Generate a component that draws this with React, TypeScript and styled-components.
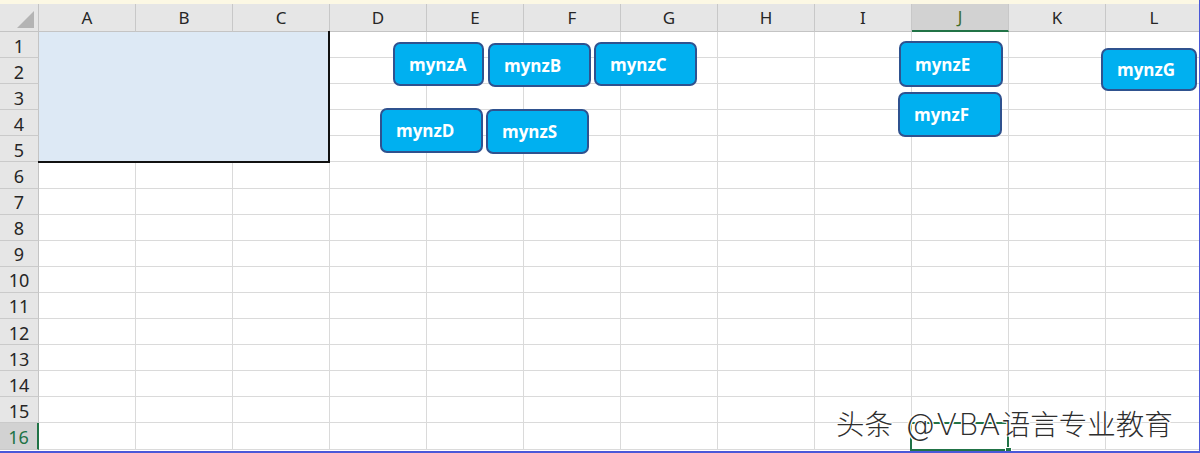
import React from "react";
import styled, { createGlobalStyle } from "styled-components";

const GlobalStyle = createGlobalStyle`
  html, body { margin: 0; padding: 0; background: #ffffff; overflow: hidden; }
  * { box-sizing: border-box; }
`;

const COLS = ["A", "B", "C", "D", "E", "F", "G", "H", "I", "J", "K", "L"];
const ROWS = Array.from({ length: 16 }, (_, i) => i + 1);
const ACTIVE_COL = "J";
const ACTIVE_ROW = 16;

const Window = styled.div`
  position: relative;
  width: 1200px;
  height: 453px;
  overflow: hidden;
  background: #ffffff;
  border-right: 1px solid #4a58d8;
  border-bottom: 2px solid #4a58d8;
  font-family: "Noto Sans", "Liberation Sans", sans-serif;
`;

const TopStrip = styled.div`
  height: 4px;
  background: #fcf8e4;
`;

const Sheet = styled.div`
  display: grid;
  grid-template-columns: 39px repeat(12, 97px);
  grid-template-rows: 28px repeat(16, 26.1px);
  width: 1203px;
`;

const Corner = styled.div`
  position: relative;
  background: #e6e6e6;
  border-right: 1px solid #c4c4c4;
  border-bottom: 1px solid #c4c4c4;
`;

const CornerTriangle = styled.svg`
  position: absolute;
  left: 16px;
  top: 6px;
`;

const ColHeader = styled.div<{ $active?: boolean }>`
  display: flex;
  align-items: flex-end;
  justify-content: center;
  padding-bottom: 1px;
  background: ${(p) => (p.$active ? "#d2d2d2" : "#e6e6e6")};
  border-right: 1px solid #c8c8c8;
  border-bottom: ${(p) => (p.$active ? "2px solid #217346" : "1px solid #c4c4c4")};
  color: ${(p) => (p.$active ? "#3f6b2a" : "#262626")};
  font-size: 17px;
  line-height: 24px;
`;

const RowHeader = styled.div<{ $active?: boolean }>`
  display: flex;
  align-items: center;
  justify-content: center;
  padding-top: 2px;
  background: ${(p) => (p.$active ? "#d2d2d2" : "#e6e6e6")};
  border-right: ${(p) => (p.$active ? "2px solid #217346" : "1px solid #c4c4c4")};
  border-bottom: 1px solid #cacaca;
  color: ${(p) => (p.$active ? "#217346" : "#262626")};
  font-size: 18px;
  line-height: 20px;
`;

const Cell = styled.div<{ $filled?: boolean }>`
  background: ${(p) => (p.$filled ? "#dde9f5" : "#ffffff")};
  border-right: 1px solid ${(p) => (p.$filled ? "#dde9f5" : "#dadada")};
  border-bottom: 1px solid ${(p) => (p.$filled ? "#dde9f5" : "#dadada")};
`;

const RangeBorder = styled.div`
  position: absolute;
  left: 38px;
  top: 31px;
  width: 292px;
  height: 132px;
  border-right: 2px solid #111111;
  border-bottom: 2px solid #111111;
  pointer-events: none;
`;

const ActiveCell = styled.div`
  position: absolute;
  left: 910px;
  top: 422px;
  width: 99px;
  height: 29px;
  border: 2px solid #217346;
  pointer-events: none;
`;

const FillHandle = styled.div`
  position: absolute;
  right: -5px;
  bottom: -5px;
  width: 7px;
  height: 7px;
  background: #217346;
  border: 1px solid #ffffff;
`;

const ShapeButton = styled.div`
  position: absolute;
  display: flex;
  align-items: center;
  padding-left: 14px;
  background: #00b0f0;
  border: 2px solid #2f528f;
  border-radius: 7px;
  color: #ffffff;
  font-family: "Open Sans", "Liberation Sans", sans-serif;
  font-weight: 700;
  font-size: 17px;
`;

const Watermark = styled.div`
  position: absolute;
  left: 836px;
  top: 404px;
  color: #2e2e2e;
  font-family: "Noto Sans CJK SC", "Noto Sans", sans-serif;
  font-weight: 300;
  font-size: 28.5px;
  line-height: 38px;
  white-space: nowrap;
  text-shadow: 1px 1px 0 #fff, -1px -1px 0 #fff, 1px -1px 0 #fff, -1px 1px 0 #fff;
`;

const Latin = styled.span`
  font-family: "DejaVu Sans", "Noto Sans", sans-serif;
  font-weight: 200;
  font-size: 30px;
  letter-spacing: 1.5px;
  margin-left: 12px;
`;

const buttons = [
  { label: "mynzA", x: 393, y: 42, w: 91, h: 44 },
  { label: "mynzB", x: 488, y: 43, w: 103, h: 44 },
  { label: "mynzC", x: 594, y: 42, w: 103, h: 44 },
  { label: "mynzD", x: 380, y: 108, w: 103, h: 45 },
  { label: "mynzS", x: 486, y: 109, w: 103, h: 45 },
  { label: "mynzE", x: 899, y: 41, w: 104, h: 46 },
  { label: "mynzF", x: 898, y: 92, w: 104, h: 45 },
  { label: "mynzG", x: 1101, y: 48, w: 96, h: 43 },
];

const isFilled = (col: number, row: number) => col < 3 && row <= 5;

export default function App() {
  return (
    <>
      <GlobalStyle />
      <Window>
        <TopStrip />
        <Sheet>
          <Corner>
            <CornerTriangle width="19" height="19" viewBox="0 0 19 19">
              <polygon points="18,1 18,18 1,18" fill="#b4b4b4" />
            </CornerTriangle>
          </Corner>
          {COLS.map((c) => (
            <ColHeader key={c} $active={c === ACTIVE_COL}>
              {c}
            </ColHeader>
          ))}
          {ROWS.map((r) => (
            <React.Fragment key={r}>
              <RowHeader $active={r === ACTIVE_ROW}>{r}</RowHeader>
              {COLS.map((c, ci) => (
                <Cell key={c} $filled={isFilled(ci, r)} />
              ))}
            </React.Fragment>
          ))}
        </Sheet>
        <RangeBorder />
        <ActiveCell>
          <FillHandle />
        </ActiveCell>
        {buttons.map((b) => (
          <ShapeButton
            key={b.label}
            style={{ left: b.x, top: b.y, width: b.w, height: b.h }}
          >
            {b.label}
          </ShapeButton>
        ))}
        <Watermark>
          头条<Latin>@VBA</Latin>语言专业教育
        </Watermark>
      </Window>
    </>
  );
}
